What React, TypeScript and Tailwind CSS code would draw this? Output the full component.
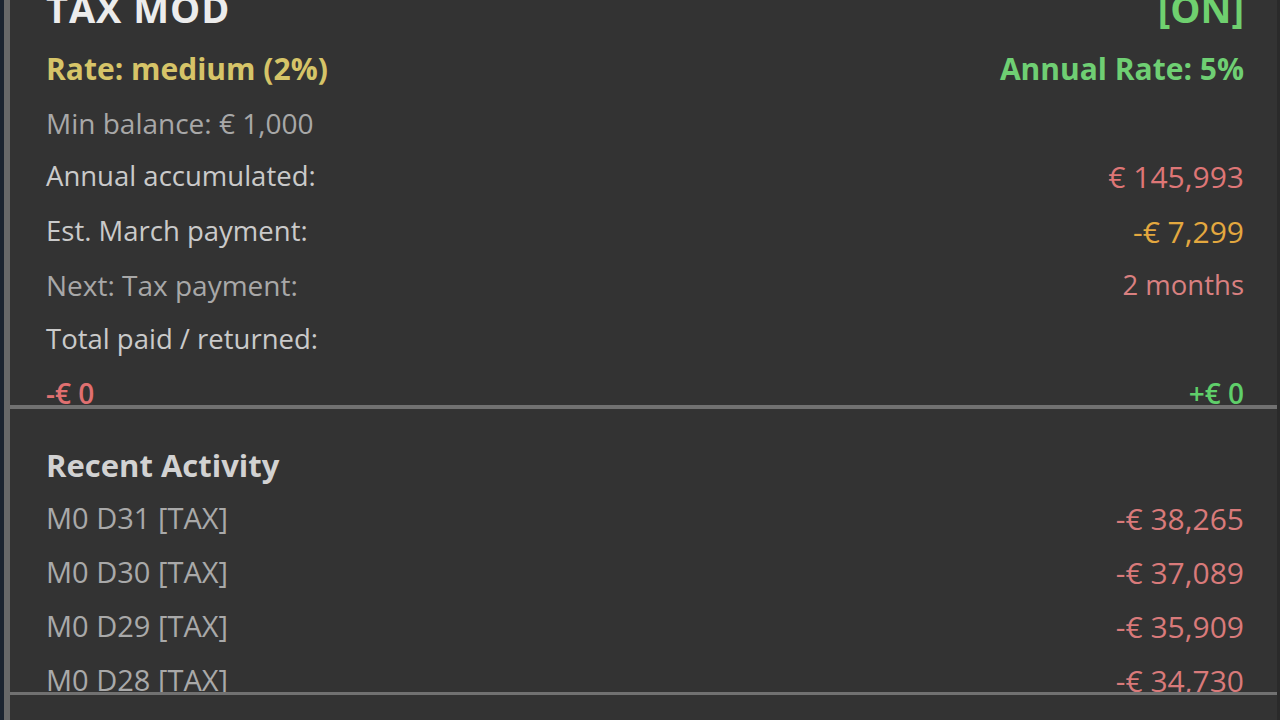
import React from "react";

type Row = {
  label: string;
  value?: string;
  labelClass: string;
  valueClass?: string;
  h: string;
};

const rows: Row[] = [
  { label: "Rate: medium (2%)", value: "Annual Rate: 5%", labelClass: "text-[#d6c468] text-[30px] font-bold", valueClass: "text-[#6fcf73] text-[30px] font-bold", h: "h-[60px]" },
  { label: "Min balance: € 1,000", labelClass: "text-[#a8a8a8] text-[28px]", h: "h-[50px]" },
  { label: "Annual accumulated:", value: "€ 145,993", labelClass: "text-[#cacaca] text-[27.5px] font-medium", valueClass: "text-[#de7676] text-[30px] font-medium", h: "h-[56px]" },
  { label: "Est. March payment:", value: "-€ 7,299", labelClass: "text-[#cacaca] text-[27.5px] font-medium", valueClass: "text-[#e3a83f] text-[30px] font-medium", h: "h-[54px]" },
  { label: "Next: Tax payment:", value: "2 months", labelClass: "text-[#a8a8a8] text-[28px]", valueClass: "text-[#d98080] text-[27.5px] font-medium", h: "h-[54px]" },
  { label: "Total paid / returned:", labelClass: "text-[#cacaca] text-[27.5px] font-medium", h: "h-[54px]" },
  { label: "-€ 0", value: "+€ 0", labelClass: "text-[#e07070] text-[28px] font-semibold", valueClass: "text-[#5fcf6a] text-[28px] font-semibold", h: "h-[54px]" },
];

const activity = [
  { when: "M0 D31 [TAX]", amount: "-€ 38,265" },
  { when: "M0 D30 [TAX]", amount: "-€ 37,089" },
  { when: "M0 D29 [TAX]", amount: "-€ 35,909" },
  { when: "M0 D28 [TAX]", amount: "-€ 34,730" },
];

export default function App() {
  return (
    <div className="h-[720px] w-[1280px] overflow-hidden bg-[#1c2430] pl-[4px] font-['Open_Sans','Lato',sans-serif]">
      <div className="flex h-full flex-col border-l-[6px] border-r-[3px] border-l-[#686868] border-r-[#2a2a2a] bg-[#333333]">
        {/* Tax summary */}
        <div className="h-[409px] shrink-0 overflow-hidden border-b-[4px] border-[#717171] pl-[36px] pr-[33px]">
          <div className="-mt-[22px] flex flex-col">
            <div className="flex h-[60px] items-center justify-between">
              <span className="text-[38px] font-bold tracking-wide text-[#ececec]">TAX MOD</span>
              <span className="text-[38px] font-bold text-[#6fd06f]">[ON]</span>
            </div>
            {rows.map((r) => (
              <div key={r.label} className={`flex items-center justify-between ${r.h}`}>
                <span className={r.labelClass}>{r.label}</span>
                {r.value && <span className={r.valueClass}>{r.value}</span>}
              </div>
            ))}
          </div>
        </div>

        {/* Recent activity */}
        <div className="h-[286px] shrink-0 overflow-hidden border-b-[3px] border-[#717171] pl-[36px] pr-[33px] pt-[30px]">
          <div className="flex h-[52px] items-center">
            <span className="text-[31px] font-bold text-[#d2d2d2]">Recent Activity</span>
          </div>
          {activity.map((a) => (
            <div key={a.when} className="flex h-[54px] items-center justify-between">
              <span className="text-[29px] text-[#a9a9a9]">{a.when}</span>
              <span className="text-[30px] text-[#d97a7a]">{a.amount}</span>
            </div>
          ))}
        </div>
      </div>
    </div>
  );
}
